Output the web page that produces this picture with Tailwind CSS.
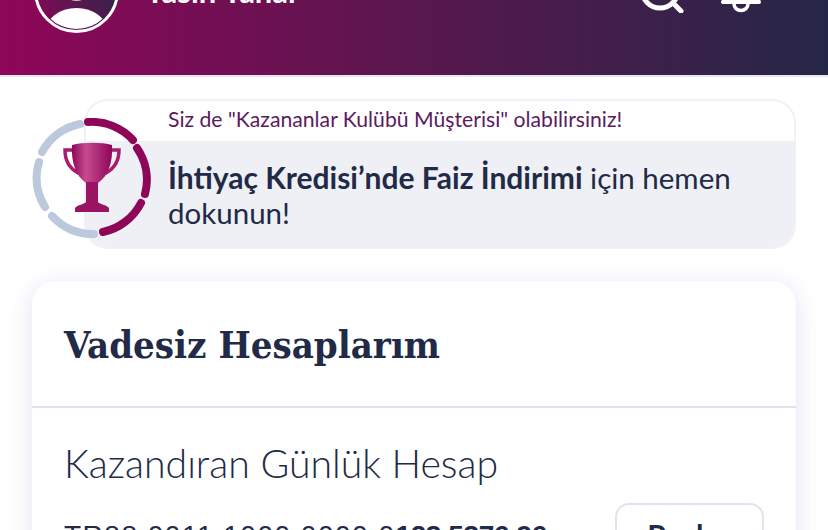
<!DOCTYPE html>
<html lang="en">
  <head>
    <meta charset="UTF-8" />
    <title>Hesaplarım</title>
    <script src="https://cdn.jsdelivr.net/npm/@tailwindcss/browser@4"></script>
  </head>
  <body class="bg-white h-[530px] overflow-hidden font-['Lato','Noto_Sans',sans-serif] text-[#212a46]">
    <!-- Header, scrolled so that only its lower edge shows -->
    <header class="h-[77px] border-b-2 border-[#e6e5f3] bg-[linear-gradient(to_right,#8e0658,#252747)] overflow-hidden flex items-end pb-[42px] pl-[34px] pr-[65px]">
      <svg class="w-[85px] h-[85px] shrink-0" viewBox="0 0 85 85" fill="none">
        <defs>
          <linearGradient id="avatarBg" x1="0" y1="1" x2="1" y2="0.3">
            <stop offset="0" stop-color="#8e0658"></stop>
            <stop offset="1" stop-color="#252747"></stop>
          </linearGradient>
          <clipPath id="avatarClip"><circle cx="42.5" cy="42.5" r="38.5"></circle></clipPath>
        </defs>
        <circle cx="42.5" cy="42.5" r="41" fill="url(#avatarBg)" stroke="white" stroke-width="3"></circle>
        <g clip-path="url(#avatarClip)" fill="white">
          <circle cx="42.5" cy="38" r="15" fill="#c9c3d2"></circle>
          <ellipse cx="42.5" cy="84" rx="31" ry="24"></ellipse>
        </g>
      </svg>
      <span class="ml-[26px] mb-[26px] text-[31px] leading-[32px] font-bold text-white">Yasin Yanar</span>
      <div class="ml-auto mb-[20px] flex items-end gap-[35px]">
        <svg class="w-[46px] h-[46px]" viewBox="0 0 46 46" fill="none" stroke="white" stroke-width="5" stroke-linecap="round">
          <circle cx="22" cy="23" r="18"></circle>
          <path d="M35 36l8 8"></path>
        </svg>
        <svg class="w-[44px] h-[44px]" viewBox="0 0 44 44" fill="none" stroke="white" stroke-width="4" stroke-linecap="round" stroke-linejoin="round">
          <path d="M4 33h36l-3-5V14a15 15 0 0 0-30 0v14z"></path>
          <path d="M15 35a7 6.5 0 0 0 14 0" stroke-width="3.5"></path>
        </svg>
      </div>
    </header>

    <main class="px-[32px] pt-[22px]">
      <!-- Campaign banner -->
      <section class="relative h-[150px]">
        <div class="absolute left-[52px] right-0 top-0 h-[150px] rounded-[24px] border-2 border-[#f0f1f6] overflow-hidden flex flex-col">
          <div class="h-[40px] pb-[2px] pl-[82px] flex items-center text-[21.2px] text-[#5b1c5e]">Siz de "Kazananlar Kulübü Müşterisi" olabilirsiniz!</div>
          <div class="flex-1 bg-[#eff0f5] pl-[82px] pr-[40px] pt-[19px] text-[29.5px] leading-[35px]">
            <b class="font-bold text-[30px]">İhtiyaç Kredisi’nde Faiz İndirimi</b> için hemen dokunun!
          </div>
        </div>
        <svg class="absolute left-0 top-[19px] w-[120px] h-[120px]" viewBox="0 0 120 120" fill="none" stroke-width="8" stroke-linecap="round">
          <defs>
            <linearGradient id="cupFill" x1="0" y1="0" x2="1" y2="0">
              <stop offset="0" stop-color="#8e0658"></stop>
              <stop offset="0.35" stop-color="#c64c8e"></stop>
              <stop offset="1" stop-color="#8e0658"></stop>
            </linearGradient>
          </defs>
          <g stroke="#bcc8dc">
            <path d="M48 6A56 56 0 0 0 10 34"></path>
            <path d="M7 44A56 56 0 0 0 13 89"></path>
            <path d="M20 98A56 56 0 0 0 62 116"></path>
          </g>
          <g stroke="#8e0658">
            <path d="M56 4A56 56 0 0 1 101 22"></path>
            <path d="M105 30A56 56 0 0 1 113 76"></path>
            <path d="M109 85A56 56 0 0 1 71 114"></path>
          </g>
          <path d="M41 32H33c0 11 4 18 13 23M79 32h8c0 11-4 18-13 23" stroke="#a81b6e" stroke-width="3.5"></path>
          <path d="M40 27C50 24 70 24 80 27 81 45 76 58 66 65H54C44 58 39 45 40 27z" fill="url(#cupFill)" stroke="none"></path>
          <path d="M54 64h12v20c1 2 9 3 11 6v4H43v-4c2-3 10-4 11-6z" fill="#9a1463" stroke="none"></path>
        </svg>
      </section>

      <!-- Accounts card -->
      <section class="mt-[32px] rounded-[24px] bg-white shadow-[0_4px_24px_rgba(180,185,225,0.4)]">
        <h2 class="h-[127px] border-b-2 border-[#e1e4ef] pl-[32px] pt-[37px] font-['DejaVu_Serif_Condensed','DejaVu_Serif',serif] text-[38px] leading-[54px] font-bold">Vadesiz Hesaplarım</h2>
        <div class="px-[32px] pt-[32px]">
          <h3 class="text-[39.2px] leading-[46px] font-light">Kazandıran Günlük Hesap</h3>
          <div class="mt-[17px] flex items-start justify-between">
            <p class="mt-[15px] font-['Liberation_Sans',sans-serif] text-[28px] leading-[36px] tracking-[1.5px]">TR88 0011 1000 0000 0<b class="font-bold tracking-[-0.4px]">123 5376 96</b></p>
            <button class="w-[149px] h-[64px] rounded-[14px] border-2 border-[#e1e4ef] text-[30px] font-bold">Paylaş</button>
          </div>
        </div>
      </section>
    </main>
  </body>
</html>
